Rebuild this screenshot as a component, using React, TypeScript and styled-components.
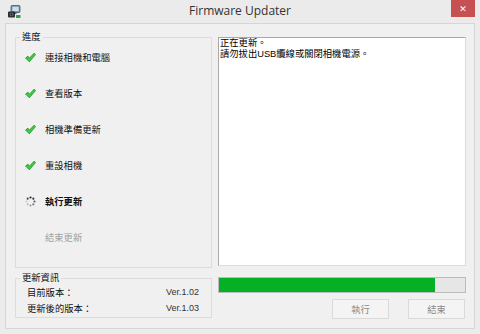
import React from 'react';
import styled, { createGlobalStyle } from 'styled-components';

type StepState = 'done' | 'active' | 'pending';

const steps: { label: string; state: StepState }[] = [
    { label: '連接相機和電腦', state: 'done' },
    { label: '查看版本', state: 'done' },
    { label: '相機準備更新', state: 'done' },
    { label: '重設相機', state: 'done' },
    { label: '執行更新', state: 'active' },
    { label: '結束更新', state: 'pending' },
];

const logLines = ['正在更新。', '請勿拔出USB纜線或關閉相機電源。'];

const progress = 87.8;

const CheckIcon = () => (
    <svg width="12" height="11" viewBox="0 0 11 10">
        <path d="M0.6 5.5 L3.1 3.8 L4.4 5.7 L9.1 0.7 L10.5 2.1 L4.3 9.3 Z"
              fill="#3fd03f" stroke="#1c8422" strokeWidth="0.8" strokeLinejoin="round"/>
    </svg>
);

const SpinnerIcon = () => {
    const dots = [0, 1, 2, 3, 4, 5, 6, 7];
    const shades = ['#222', '#333', '#555', '#777', '#999', '#bbb', '#ccc', '#444'];
    return (
        <svg width="11" height="11" viewBox="0 0 11 11">
            {dots.map(i => {
                const a = (i / 8) * Math.PI * 2 - Math.PI / 2;
                return <circle key={i} cx={5.5 + Math.cos(a) * 4} cy={5.5 + Math.sin(a) * 4} r="1.05" fill={shades[i]}/>;
            })}
        </svg>
    );
};

const AppIcon = () => (
    <svg width="14" height="14" viewBox="0 0 14 14">
        <rect x="4" y="0.5" width="9" height="7" rx="1" fill="#7f8c99" stroke="#4c5661" strokeWidth="0.8"/>
        <rect x="5.3" y="1.7" width="6.4" height="4.4" fill="#bfe3f3"/>
        <rect x="7.5" y="7.5" width="2" height="1.5" fill="#4c5661"/>
        <rect x="1" y="6.5" width="7" height="6" rx="1" fill="#2b2f33"/>
        <circle cx="4.5" cy="9.5" r="1.8" fill="#6b7480"/>
        <circle cx="4.5" cy="9.5" r="0.9" fill="#1a1d20"/>
        <rect x="9" y="10" width="4.5" height="3" fill="#3f9a4a"/>
    </svg>
);

const App = () => {
    return (
        <>
            <GlobalStyle/>
            <Window>
                <TitleBar>
                    <IconSlot><AppIcon/></IconSlot>
                    <Title>Firmware Updater</Title>
                    <CloseButton>✕</CloseButton>
                </TitleBar>
                <Client>
                    <LeftColumn>
                        <GroupBox $height={231}>
                            <Caption>進度</Caption>
                            <StepList>
                                {steps.map(step => (
                                    <StepRow key={step.label} $state={step.state}>
                                        <StepIcon>
                                            {step.state === 'done' && <CheckIcon/>}
                                            {step.state === 'active' && <SpinnerIcon/>}
                                        </StepIcon>
                                        <span>{step.label}</span>
                                    </StepRow>
                                ))}
                            </StepList>
                        </GroupBox>
                        <GroupBox $height={40}>
                            <Caption>更新資訊</Caption>
                            <InfoList>
                                <InfoRow>
                                    <span>目前版本：</span>
                                    <Version>Ver.1.02</Version>
                                </InfoRow>
                                <InfoRow>
                                    <span>更新後的版本：</span>
                                    <Version>Ver.1.03</Version>
                                </InfoRow>
                            </InfoList>
                        </GroupBox>
                    </LeftColumn>
                    <RightColumn>
                        <LogBox>
                            {logLines.map(line => <LogLine key={line}>{line}</LogLine>)}
                        </LogBox>
                        <ProgressTrack>
                            <ProgressFill style={{ width: `${progress}%` }}/>
                        </ProgressTrack>
                        <ButtonRow>
                            <Button disabled>執行</Button>
                            <Button disabled>結束</Button>
                        </ButtonRow>
                    </RightColumn>
                </Client>
            </Window>
        </>
    );
};
export default App;

const GlobalStyle = createGlobalStyle`
  html, body {
    margin: 0;
    padding: 0;
    background: #ebebeb;
  }
`;

const cjk = `"Liberation Sans", "Noto Sans CJK TC", sans-serif`;

const Window = styled.div`
  width: 480px;
  height: 334px;
  box-sizing: border-box;
  background: #ebebeb;
  display: flex;
  flex-direction: column;
  font-family: ${cjk};
  font-size: 9.3px;
  color: #111;
`;

const TitleBar = styled.div`
  height: 23px;
  display: flex;
  align-items: flex-start;
  position: relative;
  flex-shrink: 0;
`;

const IconSlot = styled.div`
  width: 14px;
  height: 14px;
  margin: 5px 0 0 7px;
`;

const Title = styled.div`
  position: absolute;
  left: 0;
  right: 0;
  top: 3px;
  text-align: center;
  font-family: "Open Sans", "Noto Sans", sans-serif;
  font-size: 12px;
  line-height: 16px;
  color: #333;
`;

const CloseButton = styled.div`
  margin-left: auto;
  margin-right: 5px;
  width: 24px;
  height: 17px;
  background: #c75050;
  color: #fff;
  font-family: "DejaVu Sans", sans-serif;
  font-size: 9px;
  font-weight: bold;
  display: flex;
  align-items: center;
  justify-content: center;
  position: relative;
  z-index: 1;
`;

const Client = styled.div`
  flex: 1;
  margin: 0 5px 5px;
  border: 1px solid #d6d6d6;
  background: #f0f0f0;
  padding: 13px 8px 0 9px;
  display: flex;
  gap: 6px;
`;

const LeftColumn = styled.div`
  width: 197px;
  display: flex;
  flex-direction: column;
  gap: 10px;
`;

const GroupBox = styled.div<{ $height: number }>`
  position: relative;
  box-sizing: border-box;
  height: ${p => p.$height}px;
  border: 1px solid #dcdcdc;
`;

const Caption = styled.div`
  position: absolute;
  top: -6px;
  left: 4px;
  padding: 0 2px;
  background: #f0f0f0;
  line-height: 11px;
  color: #111;
`;

const StepList = styled.div`
  padding: 1px 0 0 9px;
  display: flex;
  flex-direction: column;
`;

const StepRow = styled.div<{ $state: StepState }>`
  height: 36px;
  display: flex;
  align-items: center;
  gap: 9px;
  font-weight: ${p => (p.$state === 'active' ? 700 : 400)};
  color: ${p => (p.$state === 'pending' ? '#a2a2a2' : '#111')};
`;

const StepIcon = styled.div`
  width: 11px;
  height: 11px;
  display: flex;
  align-items: center;
  justify-content: center;
`;

const InfoList = styled.div`
  padding: 7px 12px 0 11px;
  display: flex;
  flex-direction: column;
  gap: 4px;
`;

const InfoRow = styled.div`
  display: flex;
  justify-content: space-between;
  align-items: center;
  height: 12px;
`;

const Version = styled.span`
  font-family: "Liberation Sans", sans-serif;
  font-size: 9px;
  color: #333;
`;

const RightColumn = styled.div`
  width: 248px;
  display: flex;
  flex-direction: column;
`;

const LogBox = styled.div`
  height: 229px;
  box-sizing: border-box;
  background: #fff;
  border: 1px solid #a9a9a9;
  border-right-color: #dcdcdc;
  border-bottom-color: #dcdcdc;
  padding: 0 1px;
  color: #000;
`;

const LogLine = styled.div`
  height: 11px;
  line-height: 11px;
`;

const ProgressTrack = styled.div`
  margin-top: 11px;
  height: 16px;
  box-sizing: border-box;
  border: 1px solid #bcbcbc;
  background: #e6e6e6;
  display: flex;
`;

const ProgressFill = styled.div`
  height: 100%;
  background: #06b025;
`;

const ButtonRow = styled.div`
  margin-top: 6px;
  display: flex;
  justify-content: flex-end;
  gap: 19px;
  padding-right: 1px;
`;

const Button = styled.button`
  width: 57px;
  height: 20px;
  box-sizing: border-box;
  border: 1px solid #dadada;
  background: #f4f4f4;
  color: #8a8a8a;
  font-family: ${cjk};
  font-size: 9.3px;
  padding: 0;
`;
